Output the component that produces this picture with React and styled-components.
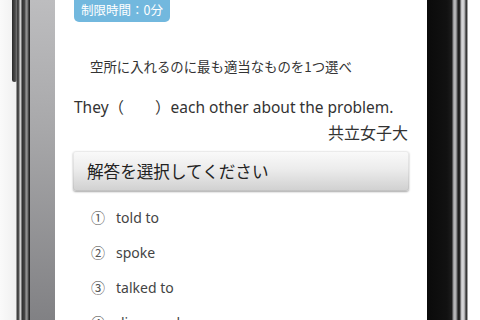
import React from "react";
import styled, { createGlobalStyle } from "styled-components";

const Global = createGlobalStyle`
  html, body { margin: 0; padding: 0; background: #fff; }
  body { width: 480px; height: 320px; overflow: hidden; font-family: "Noto Sans", "Noto Sans CJK JP", sans-serif; }
`;

const Frame = styled.div`
  display: flex;
  width: 480px;
  height: 320px;
  overflow: hidden;
  background: #fff;
`;

const LeftBezel = styled.div`
  position: relative;
  width: 55px;
  flex: none;
  background:
    linear-gradient(to right,
      #fafafa 0px, #f0f0f0 16px,
      #3a3a3a 17px, #555 19px,
      #d8d8d8 20px, #c8c8c8 21px,
      #2e2e2e 22px, #4a4a4a 25px,
      #9a9a9a 26px, #6c6c6c 28px,
      #202020 29px, #303030 30px,
      transparent 30px),
    linear-gradient(to bottom, #bdbdbf 0%, #a8a8aa 40%, #818184 100%);
`;

const SideKey = styled.div`
  position: absolute;
  left: 12px;
  top: -6px;
  width: 5px;
  height: 88px;
  border-radius: 0 0 3px 3px;
  background: linear-gradient(to right, #2a2a2a, #4a4a4a 60%, #777);
`;

const RightBezel = styled.div`
  width: 53px;
  flex: none;
  background: linear-gradient(to right,
    #0a0a0a 0px, #111 20px, #1c1c1c 25px,
    #8a8a8c 26px, #c4c4c6 28px, #707072 30px,
    #1a1a1a 31px, #2a2a2a 33px,
    #b8b8ba 34px, #e0e0e2 36px, #9a9a9c 38px,
    #2a2a2a 39px, #444 40px,
    #ffffff 41px, #ffffff 53px);
`;

const Screen = styled.div`
  flex: 1;
  min-width: 0;
  background: #fff;
  padding: 0 18px 0 19px;
  display: flex;
  flex-direction: column;
  color: #333;
  & > * { flex-shrink: 0; }
`;

const Badge = styled.div`
  align-self: flex-start;
  background: #72b8de;
  color: #fff;
  font-family: "Noto Sans CJK JP", sans-serif;
  font-size: 12.5px;
  line-height: 22px;
  height: 23px;
  padding: 0 7px 0 7px;
  margin-top: -1px;
  border-radius: 0 0 5px 5px;
`;

const Instruction = styled.div`
  margin-top: 34px;
  padding-left: 16px;
  font-family: "Noto Sans CJK JP", sans-serif;
  font-size: 13.4px;
  line-height: 20px;
  color: #333;
`;

const Question = styled.div`
  margin-top: 21px;
  font-size: 15.5px;
  line-height: 20px;
  color: #333;
  font-family: "Noto Sans", "Noto Sans CJK JP", sans-serif;
  white-space: nowrap;
`;

const Source = styled.div`
  align-self: flex-end;
  margin-right: 1px;
  margin-top: 5px;
  font-family: "Noto Sans CJK JP", sans-serif;
  font-size: 16px;
  line-height: 20px;
  color: #333;
`;

const SelectButton = styled.div`
  margin: 9px 0 0 -1px;
  height: 40px;
  border-radius: 3px;
  background: linear-gradient(to bottom, #fafafa 0%, #ececec 45%, #d0d0d0 100%);
  box-shadow: 0 1px 2px rgba(0,0,0,0.35), inset 0 0 0 1px rgba(0,0,0,0.06);
  display: flex;
  align-items: center;
  padding-left: 14px;
  font-family: "Noto Sans CJK JP", sans-serif;
  font-size: 16.6px;
  color: #222;
`;

const OptionList = styled.ul`
  list-style: none;
  margin: 16px 0 0;
  padding: 0 0 0 17px;
  display: flex;
  flex-direction: column;
  gap: 15px;
`;

const Option = styled.li`
  display: flex;
  align-items: center;
  height: 20px;
  font-size: 14px;
  color: #444;
`;

const Num = styled.span`
  width: 25px;
  font-family: "Noto Sans CJK JP", sans-serif;
  font-size: 14px;
  color: #555;
`;

const options = ["told to", "spoke", "talked to", "discussed"];
const nums = ["①", "②", "③", "④"];

export default function App() {
  return (
    <>
      <Global />
      <Frame>
        <LeftBezel>
          <SideKey />
        </LeftBezel>
        <Screen>
          <Badge>制限時間：0分</Badge>
          <Instruction>空所に入れるのに最も適当なものを1つ選べ</Instruction>
          <Question>They（　　）each other about the problem.</Question>
          <Source>共立女子大</Source>
          <SelectButton>解答を選択してください</SelectButton>
          <OptionList>
            {options.map((o, i) => (
              <Option key={o}>
                <Num>{nums[i]}</Num>
                {o}
              </Option>
            ))}
          </OptionList>
        </Screen>
        <RightBezel />
      </Frame>
    </>
  );
}
